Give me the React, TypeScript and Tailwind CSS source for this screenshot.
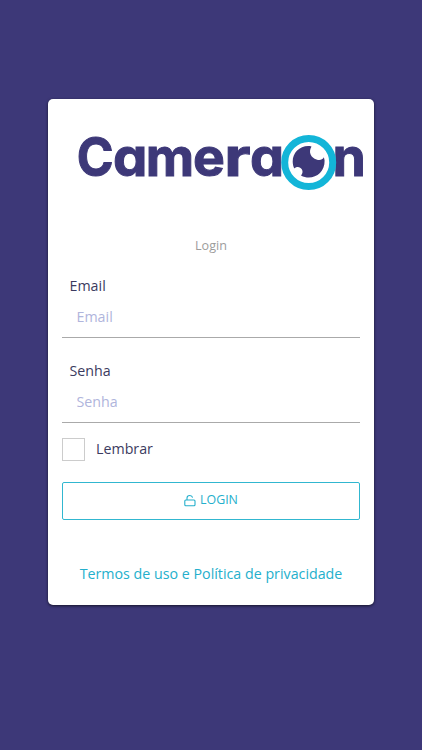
const letters = [
  { char: "C", x: 28.8, stretch: 0.94 },
  { char: "a", x: 65.1, stretch: 1.03 },
  { char: "m", x: 97.8, stretch: 1 },
  { char: "e", x: 145.1, stretch: 1.01 },
  { char: "r", x: 176.3, stretch: 1.22 },
  { char: "a", x: 202.1, stretch: 1.02 },
  { char: "n", x: 284.5, stretch: 1.01 },
];

function Logo() {
  return (
    <svg viewBox="0 0 326 100" className="block h-[100px] w-[326px] shrink-0" role="img" aria-label="CameraOn">
      {letters.map(({ char, x, stretch }, i) => (
        <text
          key={i}
          transform={`translate(${x} 77.2) scale(${stretch} 1)`}
          fill="#3d3878"
          stroke="#3d3878"
          strokeWidth="1"
          className="font-['Inter'] text-[53px] font-bold [font-feature-settings:'cv11']"
        >
          {char}
        </text>
      ))}
      <circle cx="260.7" cy="63.5" r="24" fill="#fff" stroke="#13b5d8" strokeWidth="7" />
      <path
        d="M263.500 47.400C253 45.500 244.700 53 244.700 62.500C244.700 65 245.300 67.500 246.300 69.500C248 67.800 250.500 67.500 252.500 69C255 70.800 255.200 74 253 76.500C263.500 82.500 277 75 276.600 61.500L275.900 58.300C274.500 61 271.500 61.700 268.500 60.500C263 58.500 260 53.500 263.500 47.400Z"
        fill="#3d3878"
      />
    </svg>
  );
}

function Field({ label, type }: { label: string; type: string }) {
  return (
    <label className="block">
      <span className="block pl-[7.5px] text-[14.25px] leading-[22px] text-[#3b3b60]">{label}</span>
      <input
        type={type}
        placeholder={label}
        className="block h-[41px] w-full border-b border-[#aaa] bg-transparent px-[14.5px] pb-px text-[14.25px] outline-none placeholder:text-[#b0b5dc]"
      />
    </label>
  );
}

export default function App() {
  return (
    <main className="flex h-[750px] justify-center bg-[#3d3878] pt-[99px] font-['Open_Sans',sans-serif]">
      <section className="h-[506px] w-[326px] rounded-[5px] bg-white shadow-[0_1px_3px_rgba(0,0,0,0.65)]">
        <Logo />
        <form className="px-[14px] pt-[37px]">
          <h1 className="text-center text-[12.6px] leading-5 text-[#9c9c9c]">Login</h1>
          <div className="mt-[19px] flex flex-col gap-[22px]">
            <Field label="Email" type="email" />
            <Field label="Senha" type="password" />
          </div>
          <label className="mt-[15px] flex h-[23px] items-center">
            <input type="checkbox" className="size-[23px] appearance-none border border-[#ccc] bg-white" />
            <span className="ml-[11px] -mt-0.5 text-[14.25px] leading-[22px] text-[#3b3b60]">Lembrar</span>
          </label>
          <button
            type="button"
            className="mt-[21px] flex h-[38px] w-full items-center justify-center gap-1 rounded-[2px] border border-[#31b7d0] pb-px text-[12.4px] text-[#24afcc]"
          >
            <svg viewBox="0 0 12 13" className="-mt-px h-[13px] w-3" fill="none" stroke="currentColor" strokeWidth="1.1">
              <rect x="0.8" y="6" width="10.200" height="5.800" rx="1" />
              <path d="M3 6V4Q3 1.500 5.800 1.500Q8.200 1.500 8.600 3.600" />
            </svg>
            LOGIN
          </button>
          <a className="mt-[43px] block text-center text-[14.25px] leading-[22px] whitespace-nowrap text-[#24afcc]">
            Termos de uso e Política de privacidade
          </a>
        </form>
      </section>
    </main>
  );
}
